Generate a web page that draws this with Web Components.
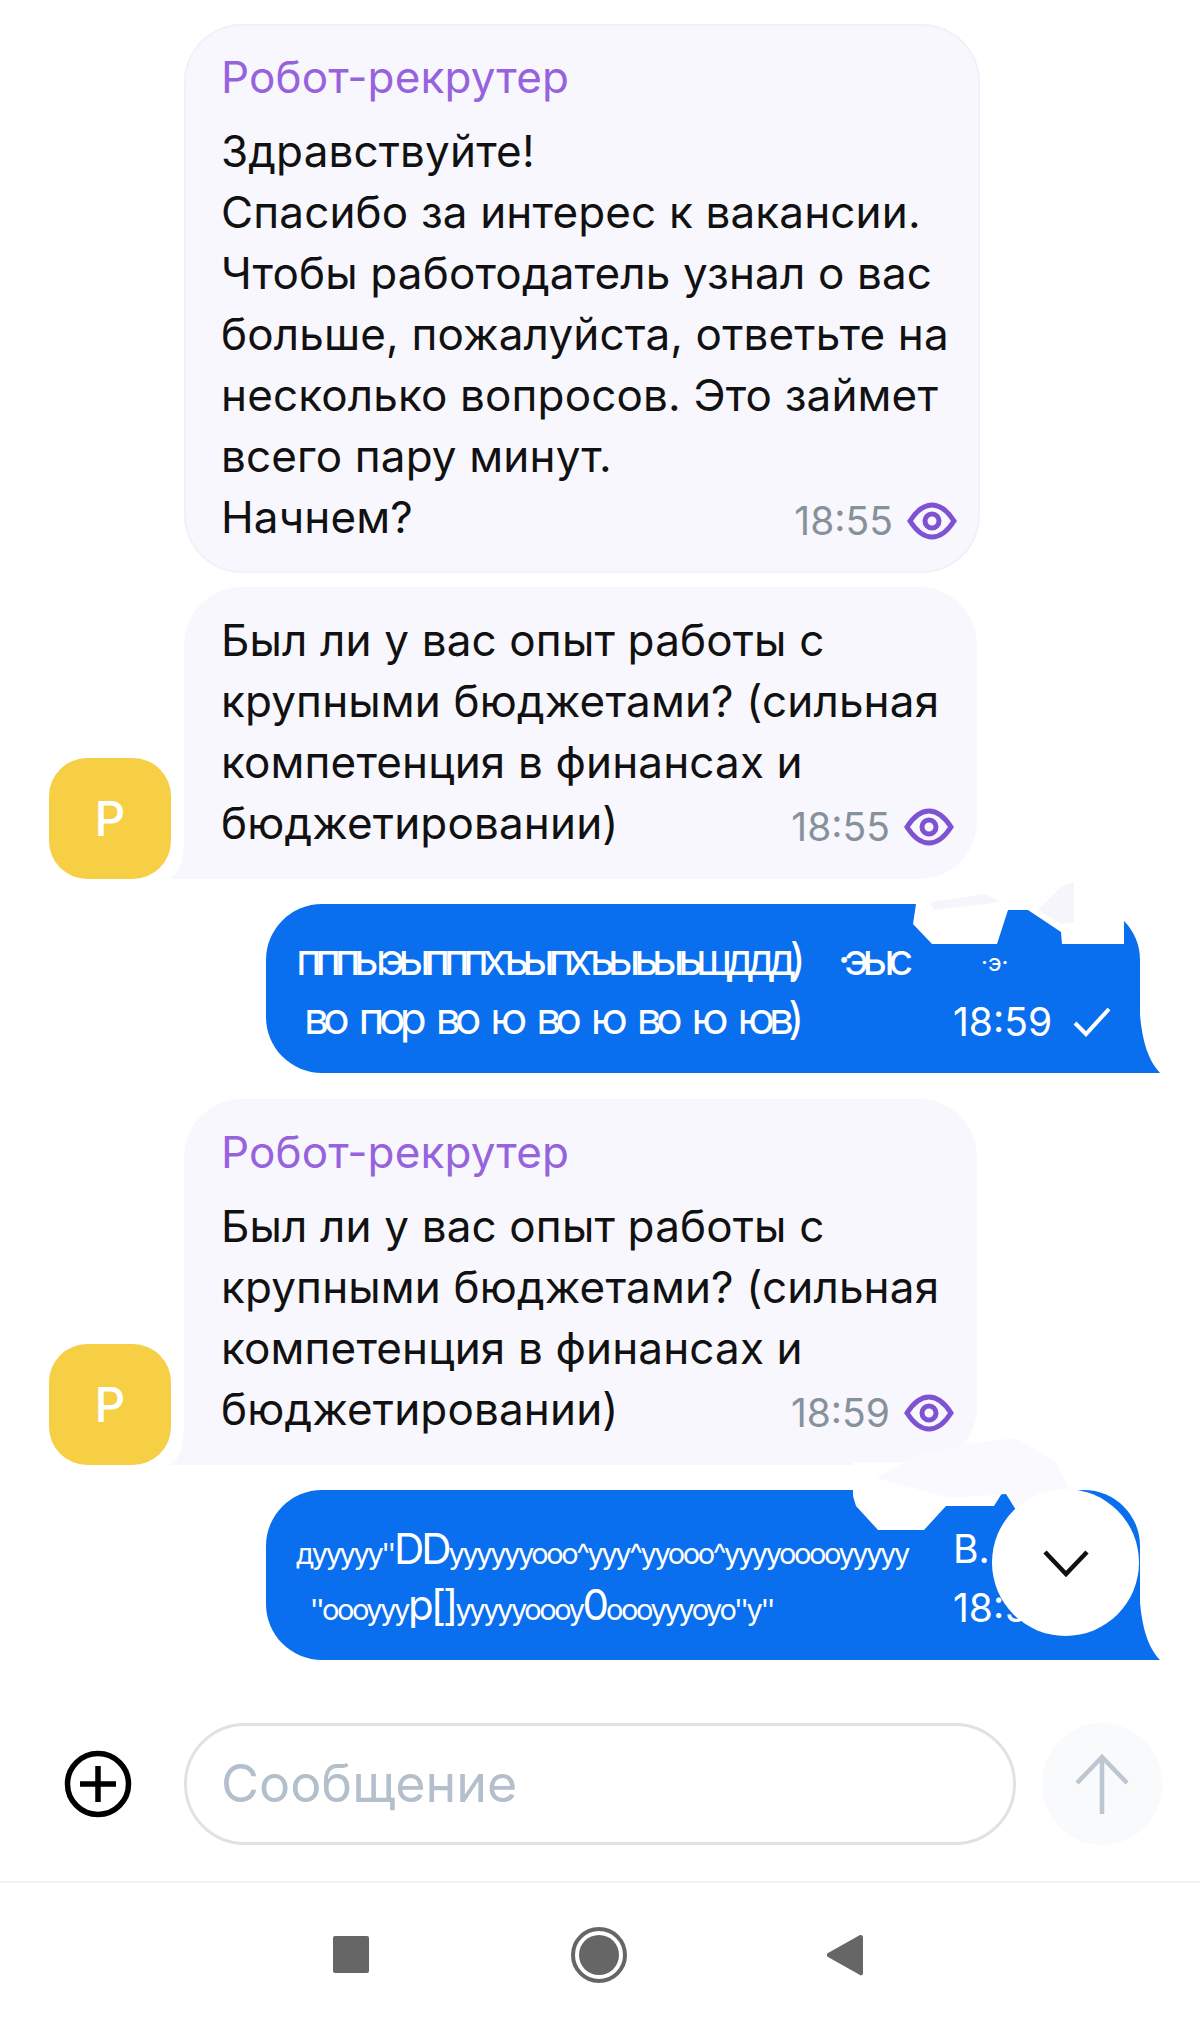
<!DOCTYPE html>
<html lang="ru">
<head>
<meta charset="utf-8">
<title>Чат</title>
<style>
    html, body { margin: 0; padding: 0; background: #fff; }
    body { width: 1200px; height: 2026px; overflow: hidden; font-family: Inter, "Liberation Sans", sans-serif; }
</style>
</head>
<body>
<chat-page>
    <chat-row top="24">
        <bot-bubble name="Робот-рекрутер" time="18:55" width="796">Здравствуйте!<br>Спасибо за интерес к вакансии.<br>Чтобы работодатель узнал о вас<br>больше, пожалуйста, ответьте на<br>несколько вопросов. Это займет<br>всего пару минут.<br>Начнем?</bot-bubble>
    </chat-row>
    <chat-row top="14" avatar>
        <bot-bubble time="18:55" width="793" tail>Был ли у вас опыт работы с<br>крупными бюджетами? (сильная<br>компетенция в финансах и<br>бюджетировании)</bot-bubble>
    </chat-row>
    <my-bubble variant="one" time="18:59" top="25"></my-bubble>
    <chat-row top="26" avatar>
        <bot-bubble name="Робот-рекрутер" time="18:59" width="793" tail>Был ли у вас опыт работы с<br>крупными бюджетами? (сильная<br>компетенция в финансах и<br>бюджетировании)</bot-bubble>
    </chat-row>
    <my-bubble variant="two" time="18:59" top="25"><scroll-down></scroll-down></my-bubble>
    <chat-composer></chat-composer>
    <nav-bar></nav-bar>
</chat-page>

<script>
class ChatPage extends HTMLElement {
    constructor() {
        super();
        this.attachShadow({ mode: "open" });
        this.shadowRoot.innerHTML = `
            <style>
                :host { display: flex; flex-direction: column; width: 1200px; height: 2026px; color: #111; }
            </style>
            <slot></slot>
        `;
    }
}

class ChatRow extends HTMLElement {
    constructor() {
        super();
        this.attachShadow({ mode: "open" });
        this.shadowRoot.innerHTML = `
            <style>
                :host { display: flex; align-items: flex-end; padding-left: 49px; gap: 13px; }
                .slot { width: 122px; height: 121px; flex: none; }
            </style>
            <div class="slot"></div>
            <slot></slot>
        `;
    }

    connectedCallback() {
        this.style.marginTop = this.getAttribute("top") + "px";
        if (this.hasAttribute("avatar")) {
            this.shadowRoot.querySelector(".slot").innerHTML = "<bot-avatar>Р</bot-avatar>";
        }
    }
}

class BotAvatar extends HTMLElement {
    constructor() {
        super();
        this.attachShadow({ mode: "open" });
        this.shadowRoot.innerHTML = `
            <style>
                :host {
                    display: flex; align-items: center; justify-content: center;
                    width: 122px; height: 121px; border-radius: 38px;
                    background: #f6cf45; color: #fff;
                    font: 500 48px Inter, "Liberation Sans", sans-serif;
                }
            </style>
            <slot></slot>
        `;
    }
}

class BotBubble extends HTMLElement {
    constructor() {
        super();
        this.attachShadow({ mode: "open" });
        this.shadowRoot.innerHTML = `
            <style>
                :host {
                    display: block; position: relative; box-sizing: border-box;
                    padding: 23px 20px 25px 37px;
                    background: #f8f7fe;
                    box-shadow: inset 0 0 0 2px #f2f1f9;
                    border-radius: 58px;
                    font: 400 44px/61px Inter, "Liberation Sans", sans-serif;
                    letter-spacing: 0.15px;
                    color: #111;
                    white-space: nowrap;
                }
                :host([tail]) { border-bottom-left-radius: 0; box-shadow: none; }
                .name { color: #9763dd; margin-bottom: 13px; }
                .name:empty { display: none; }
                .meta {
                    display: flex; justify-content: flex-end; align-items: center; gap: 14px;
                    box-sizing: border-box; margin: -61px 3px 0 0; height: 61px; padding-top: 6px;
                    font-size: 39px; letter-spacing: 0; color: #87919b;
                }
                .meta svg { width: 50px; height: 40px; }
                .tail { position: absolute; left: -15px; bottom: 0; width: 16px; height: 44px; display: none; }
                :host([tail]) .tail { display: block; }
            </style>
            <svg class="tail" viewBox="0 0 16 44"><path d="M16 0V44H0C9 40 15 28 15 0Z" fill="#f8f7fe"/></svg>
            <div class="name"></div>
            <div><slot></slot></div>
            <div class="meta">
                <span class="time"></span>
                <svg viewBox="0 0 50 40" fill="none" stroke="#7f52d2" stroke-width="5">
                    <path d="M3 20C10 9 17 4 25 4S40 9 47 20C40 31 33 36 25 36S10 31 3 20Z"/>
                    <circle cx="25" cy="20" r="7"/>
                </svg>
            </div>
        `;
    }

    connectedCallback() {
        this.style.width = this.getAttribute("width") + "px";
        this.shadowRoot.querySelector(".name").textContent = this.getAttribute("name") || "";
        this.shadowRoot.querySelector(".time").textContent = this.getAttribute("time");
    }
}

class MyBubble extends HTMLElement {
    constructor() {
        super();
        this.attachShadow({ mode: "open" });
        this.shadowRoot.innerHTML = `
            <style>
                :host {
                    display: block; position: relative; box-sizing: border-box;
                    width: 874px; height: 170px; margin-left: 266px;
                    background: #0a6fee;
                    border-radius: 56px 56px 0 56px;
                    color: #fff;
                    font: 400 44px/59px Inter, "Liberation Sans", sans-serif;
                }
                .body { display: flex; padding: 26px 0 0 30px; }
                .text { width: 657px; flex: none; white-space: pre; }
                .text div { height: 59px; }
                .meta {
                    display: flex; flex-direction: column; align-items: flex-start; width: 157px; flex: none;
                    font-size: 39px;
                }
                .meta div { height: 59px; display: flex; align-items: center; gap: 21px; position: relative; top: 3px; }
                .meta svg { width: 38px; height: 30px; }
                .one .l1 { letter-spacing: -6.5px; word-spacing: 7px; }
                .one .l2 { letter-spacing: -5.5px; word-spacing: 7.5px; padding-left: 8px; }
                .two .l1 { font-size: 29px; letter-spacing: -2.4px; position: relative; top: 3px; }
                .two .l2 { font-size: 29px; letter-spacing: -2.4px; padding-left: 8px; }
                .two b { font-weight: 400; font-size: 42px; letter-spacing: -3px; }
                .tail { position: absolute; right: -20px; bottom: 0; width: 21px; height: 76px; }
                .cut { position: absolute; left: 0; top: -28px; width: 874px; height: 90px; overflow: visible; }
            </style>
            <svg class="tail" viewBox="0 0 21 76"><path d="M0 0C1 34 6 60 21 76H0Z" fill="#0a6fee"/></svg>
            <div class="body">
                <div class="text"><div class="l1"></div><div class="l2"></div></div>
                <div class="meta"><div class="m1"></div><div class="m2"></div></div>
            </div>
            <svg class="cut" viewBox="0 0 874 90"></svg>
            <slot></slot>
        `;
    }

    connectedCallback() {
        const variant = this.getAttribute("variant");
        const root = this.shadowRoot;
        this.style.marginTop = this.getAttribute("top") + "px";
        root.querySelector(".body").classList.add(variant);
        if (variant == "one") {
            root.querySelector(".l1").textContent = "пппыэыпппхъыпхъыьыьщддд)   ·эыс";
            root.querySelector(".l2").textContent = "во пор во ю во ю во ю юв)";
            root.querySelector(".m1").innerHTML = `<span style="margin-left:28px;font-size:24px">·э·</span>`;
            root.querySelector(".m2").innerHTML = this.getAttribute("time") +
                `<svg viewBox="0 0 38 30" fill="none" stroke="#fff" stroke-width="4"><path d="M2 16L13 27L36 2"/></svg>`;
            root.querySelector(".cut").innerHTML = `
                <path d="M650 28L690 4L810 0L858 20V68H796L795 56L762 34H742L731 68H666L647 48Z" fill="#fff"/>
                <path d="M664 26L720 18L735 26L668 34Z" fill="#f6f5fb"/>
                <path d="M772 34L796 10L808 6V46L795 48Z" fill="#f6f5fb"/>`;
        } else {
            root.querySelector(".l1").innerHTML = "дууууу''<b>DD</b>ууууууооо^ууу^ууооо^ууууооооууууу";
            root.querySelector(".l2").innerHTML = " ''оооууу<b>р[]</b>уууууоооу<b>0</b>оооуууоуо''у''";
            root.querySelector(".m1").innerHTML = `<span>В.</span>`;
            root.querySelector(".m2").innerHTML = this.getAttribute("time");
            root.querySelector(".cut").innerHTML = `
                <path d="M587 0H800V28H738L728 44H680L658 68H612L590 44L587 34Z" fill="#fff"/>
                <path d="M610 16L650 -6L700 -18L750 -24L790 0L820 60L770 80L740 32L684 36Z" fill="#faf9fd"/>`;
        }
    }
}

class ScrollDown extends HTMLElement {
    constructor() {
        super();
        this.attachShadow({ mode: "open" });
        this.shadowRoot.innerHTML = `
            <style>
                :host {
                    position: absolute; right: 1px; top: -1px;
                    display: flex; align-items: center; justify-content: center;
                    width: 147px; height: 147px; border-radius: 50%; background: #fff;
                }
                svg { width: 48px; height: 28px; }
            </style>
            <svg viewBox="0 0 48 28" fill="none" stroke="#111" stroke-width="4.5"><path d="M3 3L24 25L45 3"/></svg>
        `;
    }
}

class ChatComposer extends HTMLElement {
    constructor() {
        super();
        this.attachShadow({ mode: "open" });
        this.shadowRoot.innerHTML = `
            <style>
                :host {
                    display: flex; align-items: center;
                    height: 124px; margin-top: 62px; padding-left: 63px;
                }
                .plus { width: 70px; height: 70px; flex: none; margin-right: 51px; }
                .input {
                    box-sizing: border-box; width: 832px; height: 122px; flex: none;
                    border: 3px solid #dde3e7; border-radius: 61px;
                    padding-left: 34px; display: flex; align-items: center;
                    font: 400 52px Inter, "Liberation Sans", sans-serif; color: #b3bfca;
                }
                .send {
                    width: 120px; height: 122px; flex: none; margin-left: 26px; border-radius: 50%;
                    background: #f8fafb; display: flex; align-items: center; justify-content: center;
                }
                .send svg { width: 56px; height: 60px; }
            </style>
            <svg class="plus" viewBox="0 0 70 70" fill="none" stroke="#000" stroke-width="5.5">
                <circle cx="35" cy="35" r="30.5"/>
                <path d="M35 17V53M17 35H53"/>
            </svg>
            <div class="input">Сообщение</div>
            <div class="send">
                <svg viewBox="0 0 56 60" fill="none" stroke="#bcc7d1" stroke-width="4.5"><path d="M28 60V3M3 29L28 3L53 29"/></svg>
            </div>
        `;
    }
}

class NavBar extends HTMLElement {
    constructor() {
        super();
        this.attachShadow({ mode: "open" });
        this.shadowRoot.innerHTML = `
            <style>
                :host {
                    display: flex; align-items: center; box-sizing: border-box;
                    height: 145px; margin-top: 36px; padding: 0 0 0 333px;
                    border-top: 2px solid #f1f2f3;
                }
                svg { display: block; flex: none; }
            </style>
            <svg width="36" height="37" viewBox="0 0 36 37"><rect width="36" height="37" rx="2" fill="#666"/></svg>
            <svg width="56" height="56" viewBox="0 0 56 56" style="margin-left:202px">
                <circle cx="28" cy="28" r="26" fill="none" stroke="#666" stroke-width="4"/>
                <circle cx="28" cy="28" r="20" fill="#666"/>
            </svg>
            <svg width="36" height="42" viewBox="0 0 36 42" style="margin-left:200px">
                <path d="M34 1C35 1 36 2 36 3V39C36 41 34 42 33 41L1 23C-0.5 22 -0.5 20 1 19L33 1Z" fill="#666"/>
            </svg>
        `;
    }
}

customElements.define("chat-page", ChatPage);
customElements.define("chat-row", ChatRow);
customElements.define("bot-avatar", BotAvatar);
customElements.define("bot-bubble", BotBubble);
customElements.define("my-bubble", MyBubble);
customElements.define("scroll-down", ScrollDown);
customElements.define("chat-composer", ChatComposer);
customElements.define("nav-bar", NavBar);
</script>
</body>
</html>
